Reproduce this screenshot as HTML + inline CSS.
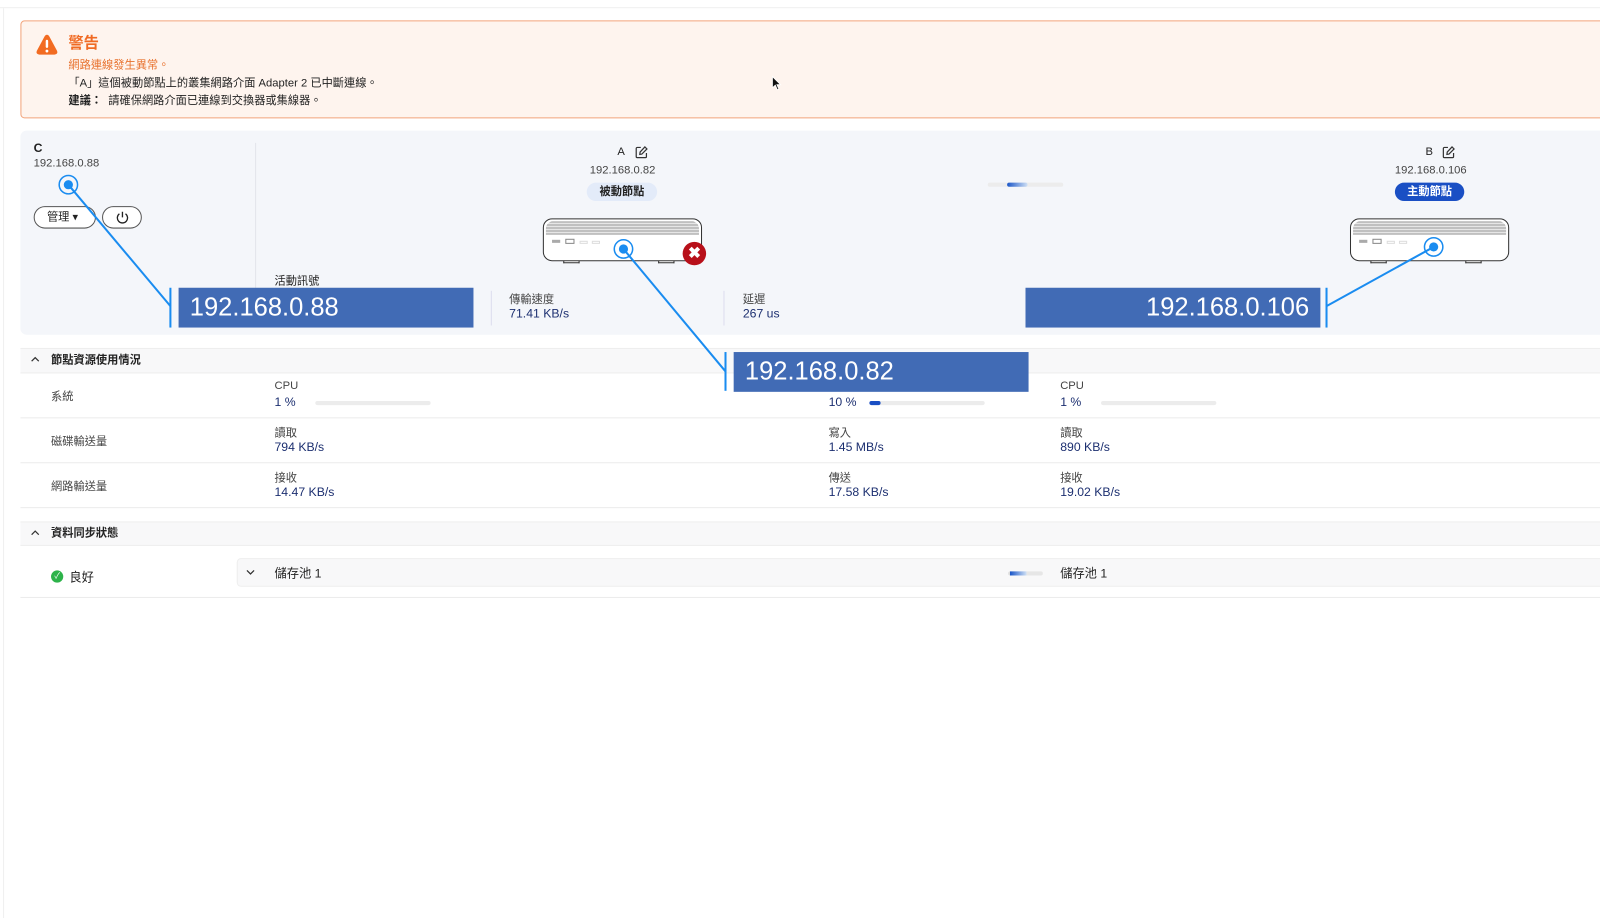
<!DOCTYPE html>
<html><head><meta charset="utf-8"><style>
*{margin:0;padding:0;box-sizing:border-box}
body{width:1600px;height:900px;background:#fff;font-family:"Liberation Sans","Noto Sans CJK TC",sans-serif;color:#222;overflow:hidden}
#w{position:absolute;left:0;top:0;width:1568px;height:882px;transform:scale(1.0204);transform-origin:0 0}
.a{position:absolute;white-space:nowrap}
.warn{left:20px;top:20px;width:1600px;height:96px;background:#fef4ee;border:1px solid #f2a47c;border-radius:4px}
.panel{left:20px;top:128px;width:1600px;height:200px;background:#f4f6fa;border-radius:6px}
.sec{left:20px;width:1600px;background:#f8f8f9;border-top:1px solid #eee;border-bottom:1px solid #eee;font-size:11px;font-weight:bold}
.row{left:20px;width:1600px;border-bottom:1px solid #ececec}
.lbl{font-size:11px;color:#444}
.val{font-size:12px;color:#1c2f70}
.ipbox{background:#416bb5;color:#fff;font-size:25px;height:39px;line-height:39px}
.bar{height:4px;background:#ececec;border-radius:2px}
.pill{font-size:11px;font-weight:bold;border-radius:10px;height:18px;line-height:18px;text-align:center}
.nas{width:156px;height:42px;border:1.5px solid #333;border-radius:9px;background:#fff}
.foot{width:16px;height:4px;border:1px solid #333;border-top:none;background:#fff}
</style></head><body><div id="w">
<div class="a" style="left:0;top:7px;width:1600px;height:1px;background:#f0f0f0"></div>
<div class="a" style="left:3px;top:8px;width:1px;height:892px;background:#f0f0f0"></div>
<div class="a warn"></div>
<svg class="a" style="left:34px;top:32px" width="24" height="24" viewBox="0 0 24 24"><path d="M12 2 Q13.5 2 14.5 4 L22 18 Q23 21 19.5 21.5 L4.5 21.5 Q1 21 2 18 L9.5 4 Q10.5 2 12 2Z" fill="#f26b21"/><rect x="10.8" y="7" width="2.4" height="8" rx="1.2" fill="#fff"/><circle cx="12" cy="18" r="1.4" fill="#fff"/></svg>
<div class="a" style="left:67px;top:31px;font-size:15px;font-weight:bold;color:#f06a23">警告</div>
<div class="a" style="left:67px;top:55px;font-size:11px;color:#e8722f">網路連線發生異常。</div>
<div class="a" style="left:67px;top:73px;font-size:11px;color:#222">「A」這個被動節點上的叢集網路介面 Adapter 2 已中斷連線。</div>
<div class="a" style="left:67px;top:90px;font-size:11px;color:#222"><b>建議：</b>&nbsp; 請確保網路介面已連線到交換器或集線器。</div>
<svg class="a" style="left:756px;top:74px" width="10" height="15" viewBox="0 0 10 15"><path d="M1 1 L1 12 L3.8 9.5 L5.8 14 L7.3 13.3 L5.4 9 L9 9Z" fill="#111" stroke="#fff" stroke-width="0.8"/></svg>

<div class="a panel"></div>
<div class="a" style="left:250px;top:140px;width:1px;height:180px;background:#e2e4ea"></div>
<div class="a" style="left:33px;top:138px;font-size:12px;font-weight:bold">C</div>
<div class="a" style="left:33px;top:154px;font-size:11px;color:#444">192.168.0.88</div>
<div class="a" style="left:33px;top:202px;width:61px;height:22px;border:1px solid #555;border-radius:11px;font-size:11px;line-height:20px;padding-left:12px;background:#fff">管理 ▾</div>
<div class="a" style="left:100px;top:202px;width:39px;height:22px;border:1px solid #555;border-radius:11px;background:#fff"><svg style="position:absolute;left:12px;top:3px" width="14" height="14" viewBox="0 0 14 14"><path d="M4 3.5 A5 5 0 1 0 10 3.5" fill="none" stroke="#222" stroke-width="1.3"/><line x1="7" y1="1.5" x2="7" y2="7" stroke="#222" stroke-width="1.3"/></svg></div>

<div class="a" style="left:605px;top:143px;font-size:11px">A</div>
<svg class="a" style="left:622px;top:143px" width="13" height="13" viewBox="0 0 13 13"><path d="M6 1.5H2.5a1 1 0 0 0-1 1v8a1 1 0 0 0 1 1h8a1 1 0 0 0 1-1V7" fill="none" stroke="#333" stroke-width="1.2"/><path d="M10 1 L12 3 L7 8 L5 8.3 L5.3 6Z" fill="none" stroke="#333" stroke-width="1.2"/></svg>
<div class="a" style="left:578px;top:161px;font-size:11px;color:#444">192.168.0.82</div>
<div class="a pill" style="left:575px;top:179px;width:69px;background:#e3ebf9;color:#222">被動節點</div>
<div class="a foot" style="left:552px;top:254px"></div><div class="a foot" style="left:645px;top:254px"></div>
<div class="a nas" style="left:532px;top:214px"></div>
<div class="a" style="left:535px;top:217px;width:150px;height:13px;background:repeating-linear-gradient(#999 0 1px,#e6e6e6 1px 3px);border-radius:7px 7px 0 0"></div>
<div class="a" style="left:541px;top:235px;width:8px;border-top:3px solid #aaa"></div>
<div class="a" style="left:554px;top:234px;width:9px;height:5px;border:1px solid #888"></div>
<div class="a" style="left:568px;top:236px;width:8px;height:3px;border:1px solid #ddd"></div>
<div class="a" style="left:580px;top:236px;width:8px;height:3px;border:1px solid #ddd"></div>
<div class="a" style="left:669px;top:237px;width:23px;height:23px;border-radius:50%;background:#b8101a;color:#fff;font-size:15px;font-weight:bold;line-height:23px;text-align:center">✖</div>

<div class="a bar" style="left:968px;top:179px;width:74px"></div>
<div class="a" style="left:987px;top:179px;width:20px;height:4px;border-radius:2px;background:linear-gradient(90deg,#1a56c8,#cfe0f5)"></div>

<div class="a" style="left:1397px;top:143px;font-size:11px">B</div>
<svg class="a" style="left:1413px;top:143px" width="13" height="13" viewBox="0 0 13 13"><path d="M6 1.5H2.5a1 1 0 0 0-1 1v8a1 1 0 0 0 1 1h8a1 1 0 0 0 1-1V7" fill="none" stroke="#333" stroke-width="1.2"/><path d="M10 1 L12 3 L7 8 L5 8.3 L5.3 6Z" fill="none" stroke="#333" stroke-width="1.2"/></svg>
<div class="a" style="left:1367px;top:161px;font-size:11px;color:#444">192.168.0.106</div>
<div class="a pill" style="left:1367px;top:179px;width:68px;background:#1a4fc4;color:#fff">主動節點</div>
<div class="a foot" style="left:1343px;top:254px"></div><div class="a foot" style="left:1436px;top:254px"></div>
<div class="a nas" style="left:1323px;top:214px"></div>
<div class="a" style="left:1326px;top:217px;width:150px;height:13px;background:repeating-linear-gradient(#999 0 1px,#e6e6e6 1px 3px);border-radius:7px 7px 0 0"></div>
<div class="a" style="left:1332px;top:235px;width:8px;border-top:3px solid #aaa"></div>
<div class="a" style="left:1345px;top:234px;width:9px;height:5px;border:1px solid #888"></div>
<div class="a" style="left:1359px;top:236px;width:8px;height:3px;border:1px solid #ddd"></div>
<div class="a" style="left:1371px;top:236px;width:8px;height:3px;border:1px solid #ddd"></div>

<div class="a" style="left:269px;top:267px;font-size:11px">活動訊號</div>
<div class="a" style="left:481px;top:285px;width:1px;height:34px;background:#dde"></div>
<div class="a lbl" style="left:499px;top:285px">傳輸速度</div>
<div class="a val" style="left:499px;top:300px">71.41 KB/s</div>
<div class="a" style="left:709px;top:285px;width:1px;height:34px;background:#dde"></div>
<div class="a lbl" style="left:728px;top:285px">延遲</div>
<div class="a val" style="left:728px;top:300px">267 us</div>

<div class="a sec" style="top:341px;height:25px;line-height:23px;padding-left:30px">節點資源使用情況</div>
<svg class="a" style="left:30px;top:349px" width="9" height="6" viewBox="0 0 9 6"><path d="M1 5 L4.5 1.5 L8 5" fill="none" stroke="#333" stroke-width="1.2"/></svg>
<div class="a row" style="top:366px;height:44px"></div>
<div class="a row" style="top:410px;height:44px"></div>
<div class="a row" style="top:454px;height:44px"></div>
<div class="a lbl" style="left:50px;top:380px">系統</div>
<div class="a lbl" style="left:50px;top:424px">磁碟輸送量</div>
<div class="a lbl" style="left:50px;top:468px">網路輸送量</div>
<div class="a lbl" style="left:269px;top:372px">CPU</div><div class="a val" style="left:269px;top:387px">1 %</div><div class="a bar" style="left:309px;top:393px;width:113px"></div>
<div class="a val" style="left:812px;top:387px">10 %</div><div class="a bar" style="left:852px;top:393px;width:113px"></div><div class="a" style="left:852px;top:393px;width:11px;height:4px;border-radius:2px;background:#1a4fc4"></div>
<div class="a lbl" style="left:1039px;top:372px">CPU</div><div class="a val" style="left:1039px;top:387px">1 %</div><div class="a bar" style="left:1079px;top:393px;width:113px"></div>
<div class="a lbl" style="left:269px;top:416px">讀取</div><div class="a val" style="left:269px;top:431px">794 KB/s</div>
<div class="a lbl" style="left:812px;top:416px">寫入</div><div class="a val" style="left:812px;top:431px">1.45 MB/s</div>
<div class="a lbl" style="left:1039px;top:416px">讀取</div><div class="a val" style="left:1039px;top:431px">890 KB/s</div>
<div class="a lbl" style="left:269px;top:460px">接收</div><div class="a val" style="left:269px;top:475px">14.47 KB/s</div>
<div class="a lbl" style="left:812px;top:460px">傳送</div><div class="a val" style="left:812px;top:475px">17.58 KB/s</div>
<div class="a lbl" style="left:1039px;top:460px">接收</div><div class="a val" style="left:1039px;top:475px">19.02 KB/s</div>

<div class="a sec" style="top:511px;height:24px;line-height:22px;padding-left:30px">資料同步狀態</div>
<svg class="a" style="left:30px;top:519px" width="9" height="6" viewBox="0 0 9 6"><path d="M1 5 L4.5 1.5 L8 5" fill="none" stroke="#333" stroke-width="1.2"/></svg>
<div class="a row" style="top:535px;height:51px"></div>
<div class="a" style="left:232px;top:547px;width:1370px;height:28px;background:#f8f8f9;border:1px solid #eee;border-radius:4px"></div>
<div class="a" style="left:50px;top:559px;width:12px;height:12px;border-radius:50%;background:#2db34a;color:#fff;font-size:8px;line-height:12px;text-align:center">✓</div>
<div class="a" style="left:68px;top:557px;font-size:12px">良好</div>
<svg class="a" style="left:241px;top:558px" width="9" height="6" viewBox="0 0 9 6"><path d="M1 1 L4.5 4.5 L8 1" fill="none" stroke="#333" stroke-width="1.2"/></svg>
<div class="a" style="left:269px;top:553px;font-size:12px">儲存池 1</div>
<div class="a" style="left:988px;top:560px;width:34px;height:4px;border-radius:2px;background:linear-gradient(90deg,#ddd 0 2px,#1a56c8 2px,#cfe0f5 18px,#e6e6e6 18px)"></div>
<div class="a" style="left:1039px;top:553px;font-size:12px">儲存池 1</div>

<div class="a ipbox" style="left:175px;top:282px;width:289px;padding-left:11px">192.168.0.88</div>
<div class="a ipbox" style="left:1005px;top:282px;width:289px;text-align:right;padding-right:11px">192.168.0.106</div>
<div class="a ipbox" style="left:719px;top:345px;width:289px;padding-left:11px">192.168.0.82</div>
<svg class="a" style="left:0;top:0" width="1600" height="900">
<g stroke="#1a8cf0" stroke-width="2" fill="none">
<line x1="167" y1="282" x2="167" y2="321"/><line x1="67" y1="181" x2="167" y2="300"/>
<line x1="1300" y1="282" x2="1300" y2="321"/><line x1="1405" y1="242" x2="1300" y2="300"/>
<line x1="711" y1="345" x2="711" y2="383"/><line x1="611" y1="244" x2="711" y2="364"/>
<circle cx="67" cy="181" r="9" stroke-width="1.5"/><circle cx="611" cy="244" r="9" stroke-width="1.5"/><circle cx="1405" cy="242" r="9" stroke-width="1.5"/>
</g>
<g fill="#1a8cf0"><circle cx="67" cy="181" r="4.5"/><circle cx="611" cy="244" r="4.5"/><circle cx="1405" cy="242" r="4.5"/></g>
</svg>
</div></body></html>
